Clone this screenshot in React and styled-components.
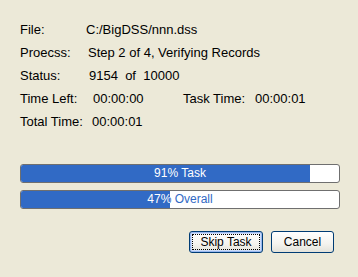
import React from 'react'
import styled, { createGlobalStyle } from 'styled-components'

const GlobalStyle = createGlobalStyle`
  html, body {
    margin: 0;
    padding: 0;
    background: #ece9d8;
  }
  body {
    font-family: 'Liberation Sans', Arial, sans-serif;
    font-size: 13px;
    color: #000000;
  }
`

const Dialog = styled.div`
  width: 358px;
  height: 277px;
  box-sizing: border-box;
  background: #ece9d8;
  display: flex;
  flex-direction: column;
  padding: 18px 20px 0 20px;
`

const InfoList = styled.div`
  display: flex;
  flex-direction: column;
`

const InfoRow = styled.div`
  display: flex;
  align-items: center;
  height: 23px;
  white-space: pre;
`

const Label = styled.span`
  width: ${(p) => p.$w}px;
  flex: none;
`

const Value = styled.span`
  width: ${(p) => (p.$w ? `${p.$w}px` : 'auto')};
  flex: none;
`

const Bars = styled.div`
  display: flex;
  flex-direction: column;
  gap: 7px;
  margin-top: 31px;
`

const Bar = styled.div`
  position: relative;
  width: 320px;
  height: 19px;
  box-sizing: border-box;
  border: 1px solid #6f6f6f;
  border-radius: 3px;
  background: #ffffff;
  overflow: hidden;
`

const BarText = styled.div`
  position: absolute;
  left: 0;
  top: 0;
  width: 318px;
  height: 17px;
  line-height: 17px;
  text-align: center;
  font-size: 12px;
  color: ${(p) => p.$color};
  white-space: pre;
`

const Fill = styled.div`
  position: absolute;
  left: 0;
  top: 0;
  height: 17px;
  background: #316ac5;
  overflow: hidden;
`

const Buttons = styled.div`
  display: flex;
  justify-content: flex-end;
  gap: 8px;
  margin-top: 22px;
  padding-right: 4px;
`

const Button = styled.button`
  width: ${(p) => p.$w}px;
  height: 22px;
  box-sizing: border-box;
  border: 1px solid #003c74;
  border-radius: 3px;
  background: linear-gradient(#ffffff, #f4f3ee 60%, #e3e2da);
  font-family: 'Liberation Sans', Arial, sans-serif;
  font-size: 12px;
  color: #000000;
  padding: 0;
  position: relative;
  box-shadow: ${(p) =>
    p.$focus ? 'inset 0 0 0 1px #98b8f0, inset 0 0 0 2px #cddcf8' : 'none'};

  &::after {
    content: '';
    display: ${(p) => (p.$focus ? 'block' : 'none')};
    position: absolute;
    inset: 2px;
    border: 1px dotted #000000;
  }
`

function Progress({ pct, label }) {
  const text = `${pct}% ${label}`
  return (
    <Bar>
      <BarText $color="#316ac5">{text}</BarText>
      <Fill style={{ width: `${Math.round(318 * pct / 100)}px` }}>
        <BarText $color="#ffffff">{text}</BarText>
      </Fill>
    </Bar>
  )
}

export default function App() {
  return (
    <Dialog>
      <GlobalStyle />
      <InfoList>
        <InfoRow>
          <Label $w={66}>File:</Label>
          <Value>C:/BigDSS/nnn.dss</Value>
        </InfoRow>
        <InfoRow>
          <Label $w={68}>Proecss:</Label>
          <Value>Step 2 of 4, Verifying Records</Value>
        </InfoRow>
        <InfoRow>
          <Label $w={69}>Status:</Label>
          <Value>9154  of  10000</Value>
        </InfoRow>
        <InfoRow>
          <Label $w={73}>Time Left:</Label>
          <Value $w={90}>00:00:00</Value>
          <Label $w={72}>Task Time:</Label>
          <Value>00:00:01</Value>
        </InfoRow>
        <InfoRow>
          <Label $w={72}>Total Time:</Label>
          <Value>00:00:01</Value>
        </InfoRow>
      </InfoList>
      <Bars>
        <Progress pct={91} label="Task" />
        <Progress pct={47} label="Overall" />
      </Bars>
      <Buttons>
        <Button $w={74} $focus>Skip Task</Button>
        <Button $w={63}>Cancel</Button>
      </Buttons>
    </Dialog>
  )
}
